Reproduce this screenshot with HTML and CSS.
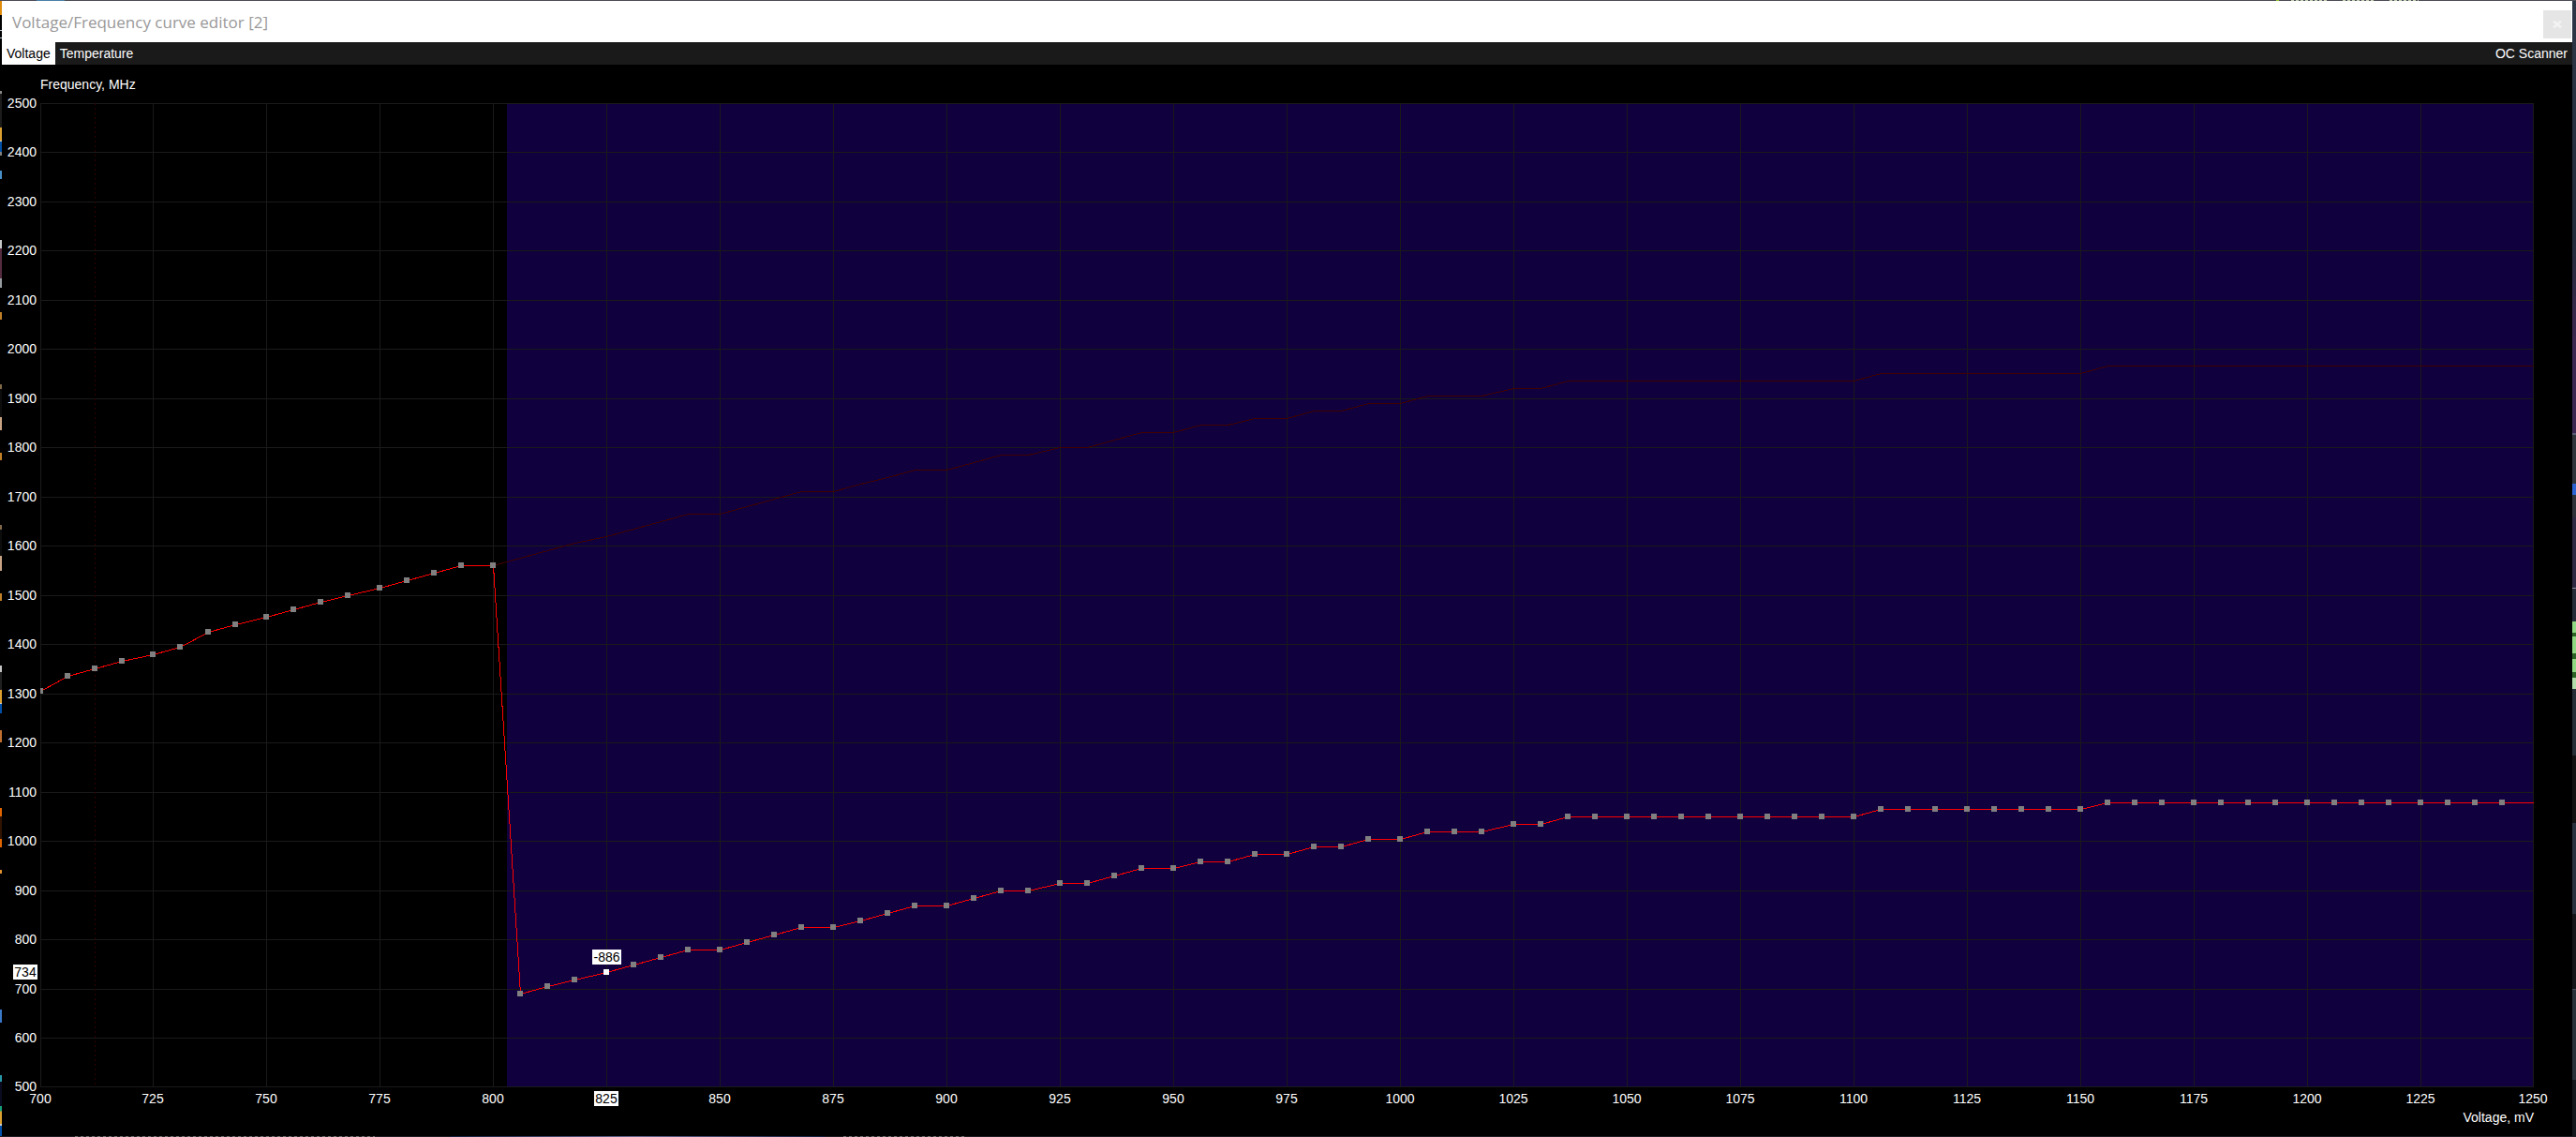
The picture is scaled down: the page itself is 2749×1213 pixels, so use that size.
FILE: index.html
```
<!DOCTYPE html>
<html lang="en">
<head>
<meta charset="utf-8">
<title>Voltage/Frequency curve editor</title>
<link rel="stylesheet" href="styles.css">
</head>
<body class="desktop">
<div class="edge edge-top"></div>
<div class="edge edge-left"></div>
<main class="window">
  <header class="titlebar">
    <h1 class="title">Voltage/Frequency curve editor [2]</h1>
    <button class="close" type="button" aria-label="Close">
      <svg width="10" height="8" viewBox="0 0 10 8"><path d="M1 0.5 9 7.5M9 0.5 1 7.5" stroke="#f3f3f3" stroke-width="2.6" fill="none"/></svg>
    </button>
  </header>
  <nav class="menubar">
    <button class="tab tab-active" type="button">Voltage</button>
    <button class="tab" type="button">Temperature</button>
    <button class="tab scanner" type="button">OC Scanner</button>
  </nav>
  <svg class="chart" id="chart" role="img" aria-label="Frequency by voltage"></svg>
</main>
<div class="edge edge-right"></div>
<div class="edge edge-bottom"></div>
<script src="chart.js"></script>
</body>
</html>
```
FILE: styles.css
```
* {
  box-sizing: border-box;
}

.desktop {
  margin: 0;
  min-height: 100vh;
  display: grid;
  grid-template-columns: 2px minmax(0, 1fr) 4px;
  grid-template-rows: 1px minmax(0, 1fr) 1px;
  background: #000;
  font-family: "Liberation Sans", Arial, sans-serif;
  font-size: 14px;
}

.edge-top {
  grid-column: 1 / -1;
  background:
    linear-gradient(#4a80a8, #4a80a8) 39px 0 / 30px 1px no-repeat,
    linear-gradient(#96c832, #96c832) right 317px top 0 / 3px 1px no-repeat,
    repeating-linear-gradient(90deg, #c8d2b4 0 3px, #4b505a 3px 5px) right 266px top 0 / 38px 1px no-repeat,
    repeating-linear-gradient(90deg, #c8d2b4 0 3px, #4b505a 3px 5px) right 216px top 0 / 33px 1px no-repeat,
    repeating-linear-gradient(90deg, #c8d2b4 0 3px, #4b505a 3px 5px) right 168px top 0 / 31px 1px no-repeat,
    #4a4b54;
}

.edge-left {
  background: linear-gradient(
    #e08c0a 0 15px, #000 15px 31px, #b4c8d8 31px 32px, #000 32px 39px, #b4c8d8 39px 40px,
    #000 40px 96px, #888 96px 99px, #1c1c1c 99px 135px, #dca030 135px 149px, #ccc 149px 150px,
    #0050a8 150px 161px, #808080 161px 165px, #000 165px 181px, #4a90c8 181px 190px, #000 190px 255px,
    #c4c8c8 255px 264px, #562c40 264px 296px, #969ca0 296px 306px, #000 306px 332px, #c08028 332px 340px,
    #000 340px 409px, #806848 409px 414px, #0c0c0c 414px 444px, #c8a484 444px 458px, #000 458px 482px,
    #c08028 482px 490px, #000 490px 559px, #806848 559px 564px, #0c0c0c 564px 592px, #c8a484 592px 608px,
    #000 608px 632px, #c08028 632px 640px, #000 640px 709px, #c4c4c4 709px 716px, #202020 716px 735px,
    #dca030 735px 749px, #ccc 749px 750px, #0050a8 750px 760px, #000 760px 778px, #c07030 778px 791px,
    #000 791px 861px, #e06400 861px 870px, #301400 870px 894px, #e06400 894px 903px, #000 903px 927px,
    #e09030 927px 931px, #000 931px 1076px, #3a78c8 1076px 1090px, #000 1090px 1146px, #2898a8 1146px 1153px,
    #0a0a20 1153px 1179px, #18a078 1179px 1184px, #dca030 1185px 1198px, #ccc 1198px 1200px, #0050a8 1200px);
}

.edge-right {
  background: linear-gradient(
    #2c3646 0, #222c3a 250px, #3c2850 360px 461px, #5c5c78 461px 463px, #30363c 463px 515px,
    #2d64d2 515px 527px, #30323a 527px 551px, #2e2a44 551px 626px, #9090a0 626px 627px,
    #262c38 627px 662px, #90d884 662px 674px, #2c6428 674px 678px, #90d884 678px 696px,
    #2c6428 696px 702px, #90d884 702px 716px, #2c6428 716px 722px, #b0dcaa 722px 734px,
    #262e38 734px 805px, #121212 805px 877px, #28323e 877px 974px, #141619 974px 1054px,
    #485060 1054px 1055px, #28303a 1055px 1151px, #14181c 1151px);
}

.edge-bottom {
  grid-column: 1 / -1;
  background:
    linear-gradient(90deg, #14203c, #64648c, #14203c) 480px 0 / 400px 1px no-repeat,
    repeating-linear-gradient(90deg, #70706c 0 3px, #202226 3px 6px) 80px 0 / 320px 1px no-repeat,
    repeating-linear-gradient(90deg, #70706c 0 3px, #202226 3px 6px) 900px 0 / 130px 1px no-repeat,
    #1c1e22;
}

.window {
  display: flex;
  flex-direction: column;
}

.titlebar {
  display: flex;
  align-items: center;
  justify-content: space-between;
  height: 44px;
  padding: 2px 1px 0 11px;
  background: #fff;
}

.title {
  margin: 0;
  color: #999;
  font: 400 17px/24px "Open Sans", "Noto Sans", sans-serif;
}

.close {
  display: grid;
  place-items: center;
  width: 30px;
  height: 30px;
  margin-top: 4px;
  padding: 0;
  border: 0;
  background: #e5e5e5;
}

.menubar {
  display: flex;
  height: 24px;
  background: #1a1a1a;
}

.tab {
  padding: 0 5px;
  border: 0;
  background: transparent;
  color: #fff;
  font: inherit;
  line-height: 24px;
}

.tab-active {
  background: #fff;
  color: #000;
}

.scanner {
  margin-left: auto;
}

.chart {
  display: block;
  width: 100%;
  flex: 1;
  min-height: 400px;
  background: #000;
  shape-rendering: crispEdges;
}

.grid {
  stroke: #1a1a1a;
}

.range {
  fill: #10003e;
}

.marker {
  stroke: #300000;
  stroke-dasharray: 2 3;
}

.base {
  fill: none;
  stroke: #400000;
}

.curve {
  fill: none;
  stroke: #f00;
}

.point {
  fill: #808080;
}

.label {
  fill: #fff;
}

.point-active,
.tag {
  fill: #fff;
}

.tag-text {
  fill: #000;
}

.middle {
  text-anchor: middle;
}

.end {
  text-anchor: end;
}
```
FILE: chart.js
```
const NS = "http://www.w3.org/2000/svg";
const chart = document.getElementById("chart");

const V = { min: 700, max: 1250, step: 25 };
const F = { min: 500, max: 2500, step: 100 };
const OFFSET = -886;
const SELECTED = 825;
const pad = { left: 41, right: 41, top: 41, bottom: 52 };

// Number of 15 MHz steps above 1305 MHz, one entry per point from 700 mV
const low = [0, 2, 3, 4, 5, 6, 8, 9, 10, 11, 12, 13, 14, 15, 16, 17, 17];
// Number of 15 MHz steps above 689 MHz, one entry per point from 806 mV
const high = [0, 1, 2, 3, 4, 5, 6, 6, 7, 8, 9, 9, 10, 11, 12, 12, 13, 14, 14, 15, 15, 16,
  17, 17, 18, 18, 19, 19, 20, 20, 21, 21, 22, 22, 22, 23, 23];

const points = [];
for (let i = 0; i <= 88; i++) {
  const volts = Math.floor(V.min + i * 6.25);
  let mhz;
  if (i < low.length) {
    mhz = 1305 + 15 * low[i];
  } else {
    const k = high[i - low.length] ?? (volts <= 1100 ? 24 : volts <= 1150 ? 25 : 26);
    mhz = 689 + 15 * k;
  }
  points.push({ volts, mhz });
}

function add(name, attrs, text) {
  const node = document.createElementNS(NS, name);
  for (const key in attrs) node.setAttribute(key, attrs[key]);
  if (text !== undefined) node.textContent = text;
  chart.append(node);
}

function tag(x, y, width, text) {
  add("rect", { class: "tag", x, y, width, height: 16 });
  add("text", { class: "tag-text middle", x: x + width / 2, y: y + 13 }, text);
}

function draw() {
  chart.replaceChildren();
  const w = chart.clientWidth;
  const h = chart.clientHeight;
  // Exclusive edges of the plot: the last grid line lies one pixel inside
  const right = w - pad.right;
  const bottom = h - pad.bottom;
  const x = v => Math.min(right - 1, Math.floor(pad.left + (v - V.min) / (V.max - V.min) * (right - pad.left)));
  const y = f => Math.min(bottom - 1, Math.floor(bottom - (f - F.min) / (F.max - F.min) * (bottom - pad.top)));
  const path = list => list.map(p => `${x(p.volts) + 0.5},${y(p.mhz) + 0.5}`).join(" ");

  add("rect", { class: "range", x: x(803), y: pad.top, width: right - x(803), height: bottom - pad.top });

  for (let f = F.min; f <= F.max; f += F.step) {
    add("line", { class: "grid", x1: pad.left, x2: right, y1: y(f) + 0.5, y2: y(f) + 0.5 });
    add("text", { class: "label end", x: pad.left - 4, y: y(f) + 5 }, f);
  }
  for (let v = V.min; v <= V.max; v += V.step) {
    add("line", { class: "grid", x1: x(v) + 0.5, x2: x(v) + 0.5, y1: pad.top, y2: bottom });
    if (v !== SELECTED) add("text", { class: "label middle", x: x(v), y: bottom + 17 }, v);
  }
  add("line", { class: "marker", x1: x(712) + 0.5, x2: x(712) + 0.5, y1: pad.top, y2: bottom - 1 });

  const base = points.slice(16).map((p, i) => i ? { volts: p.volts, mhz: p.mhz - OFFSET } : p);
  add("polyline", { class: "base", points: path(base) });
  add("polyline", { class: "curve", points: path(points) });

  for (const p of points.slice(0, -1)) {
    const left = Math.max(x(p.volts) - 3, pad.left);
    add("rect", {
      class: p.volts === SELECTED ? "point-active" : "point",
      x: left, y: y(p.mhz) - 3, width: x(p.volts) + 3 - left, height: 6
    });
  }

  const active = points.find(p => p.volts === SELECTED);
  tag(x(SELECTED) - 15, y(active.mhz) - 24, 31, OFFSET);
  tag(x(SELECTED) - 13, bottom + 4, 26, SELECTED);
  tag(pad.left - 29, y(active.mhz) - 8, 26, active.mhz);

  add("text", { class: "label", x: pad.left, y: pad.top - 15 }, "Frequency, MHz");
  add("text", { class: "label end", x: right, y: bottom + 37 }, "Voltage, mV");
}

draw();
window.addEventListener("resize", draw);
```
